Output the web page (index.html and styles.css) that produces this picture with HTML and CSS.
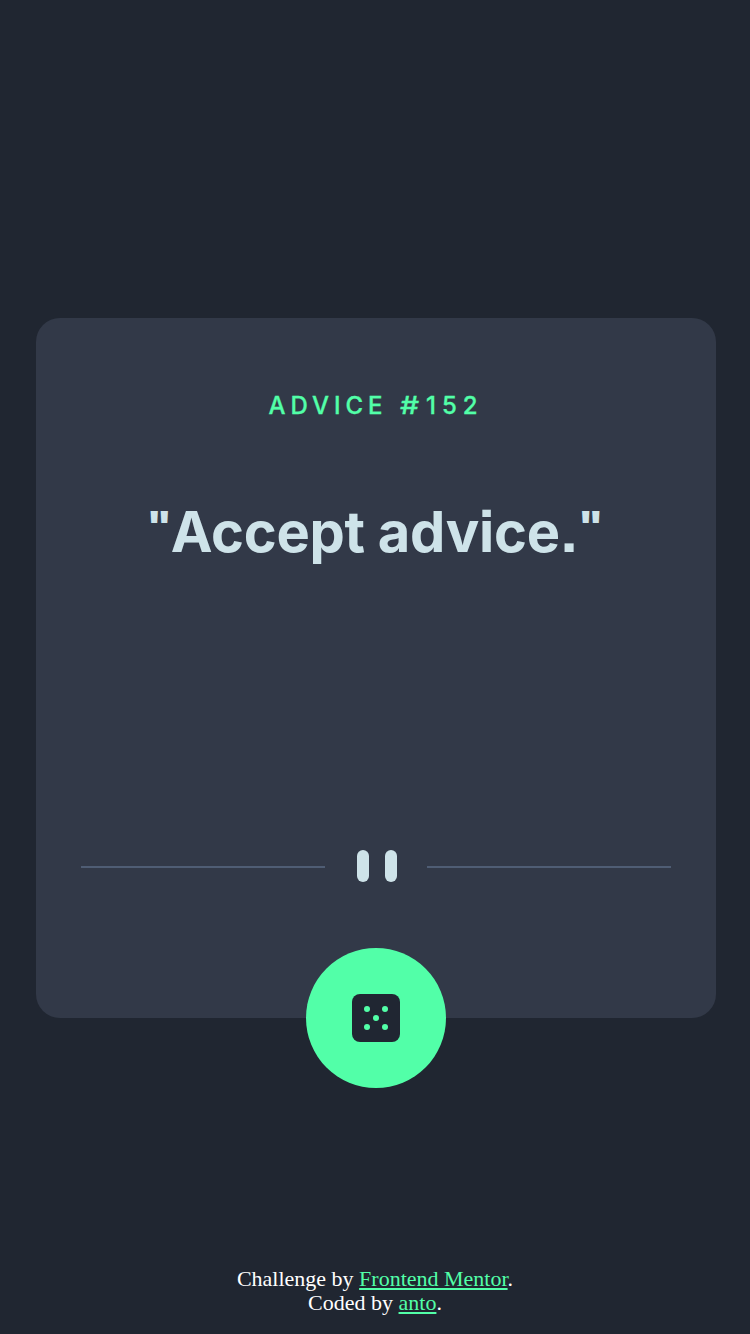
FILE: index.html
```html
<!DOCTYPE html>
<html lang="en">
<head>
<meta charset="utf-8">
<title>Advice generator</title>
<link rel="stylesheet" href="styles.css">
</head>
<body>
<main class="stage">
  <section class="card">
    <h1 class="label"><span class="word">ADVICE</span> <span class="hash">#</span>152</h1>
    <p class="quote"><span class="mark">"</span><span>Accept advice.</span><span class="mark">"</span></p>
    <div class="divider">
      <span class="rule"></span>
      <span class="bars"><i class="bar"></i><i class="bar"></i></span>
      <span class="rule"></span>
    </div>
    <button class="dice" aria-label="New advice">
      <svg width="48" height="48" viewBox="0 0 48 48">
        <rect width="48" height="48" rx="8" fill="#202632"/>
        <g fill="#52ffa8"><circle cx="15" cy="15" r="3"/><circle cx="33" cy="15" r="3"/><circle cx="24" cy="24" r="3"/><circle cx="15" cy="33" r="3"/><circle cx="33" cy="33" r="3"/></g>
      </svg>
    </button>
  </section>
</main>
<footer class="credits">
  <div>Challenge by <a class="link" href="#">Frontend Mentor</a>.</div>
  <div>Coded by <a class="link" href="#">anto</a>.</div>
</footer>
</body>
</html>
```
FILE: styles.css
```css
* { box-sizing: border-box; }
body { margin: 0; height: 1334px; display: flex; flex-direction: column; background: #202631; overflow: hidden; }
.stage { flex: 1; padding: 318px 34px 0 36px; }
.card { height: 700px; border-radius: 24px; background: #323948; display: flex; flex-direction: column; align-items: center; padding: 70px 45px 0; }
.label { margin: 0; height: 36px; font: 500 24px/36px Inter, sans-serif; letter-spacing: 6px; -webkit-text-stroke: 0.3px #52ffa8; color: #52ffa8; white-space: nowrap; }
.word { letter-spacing: 5px; }
.hash { display: inline-block; width: 26px; transform: scaleX(1.25); transform-origin: left; }
.quote { margin: 68px 0 0; height: 80px; display: flex; padding-right: 3px; font: 700 56px/80px Inter, sans-serif; font-feature-settings: "ss07", "ss08"; letter-spacing: -0.25px; color: #cee3e9; white-space: nowrap; }
/* Short, square quotation marks */
.mark { flex: none; width: 24px; height: 40px; margin-top: 14px; font-size: 40px; font-weight: 900; line-height: 40px; clip-path: inset(0 -4px 23px -4px); }
.divider { margin-top: 278px; width: 100%; height: 32px; display: flex; align-items: center; justify-content: space-between; }
.rule { width: 244px; height: 2px; margin-top: 2px; background: #4f5d74; }
.bars { display: flex; gap: 16px; padding-left: 2px; }
.bar { width: 12px; height: 32px; border-radius: 6px; background: #cee3e9; }
.dice { margin-top: 66px; flex: none; width: 140px; height: 140px; border: 0; border-radius: 50%; padding: 0; background: #52ffa8; display: flex; align-items: center; justify-content: center; }
.credits { height: 67px; font: 22px/24px "Liberation Serif", serif; color: #fff; text-align: center; }
.link { color: #52ffa8; }
```
